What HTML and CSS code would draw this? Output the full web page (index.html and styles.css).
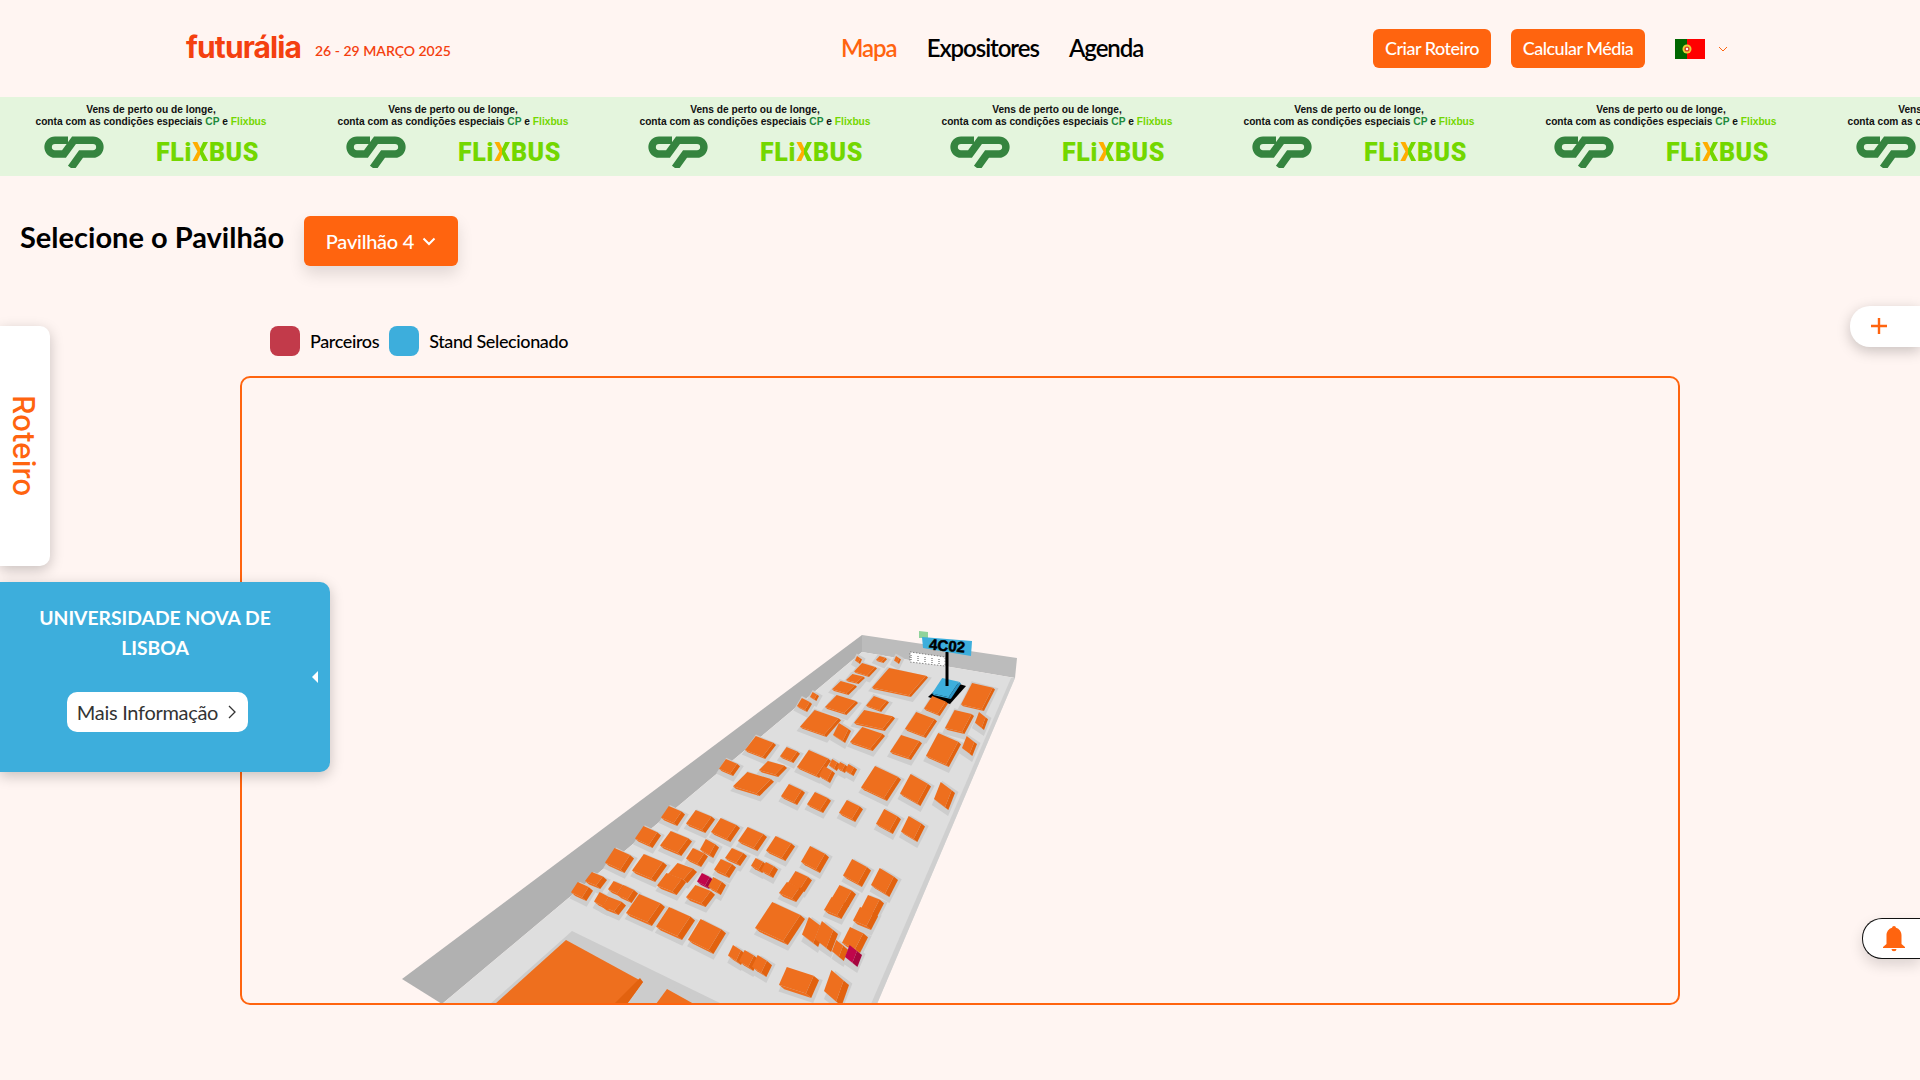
FILE: index.html
```html
<!DOCTYPE html>
<html lang="pt">
<head>
  <meta charset="UTF-8">
  <meta name="viewport" content="width=device-width, initial-scale=1.0">
  <title>Futurália - Mapa</title>
  <link rel="stylesheet" href="styles.css">
</head>
<body>
  <header class="topbar">
    <a class="logo">futurália</a>
    <span class="event-date">26 - 29 MARÇO 2025</span>
    <nav class="main-nav">
      <a class="nav-link active">Mapa</a>
      <a class="nav-link">Expositores</a>
      <a class="nav-link">Agenda</a>
    </nav>
    <div class="top-actions">
      <a class="top-btn btn-route">Criar Roteiro</a>
      <a class="top-btn btn-grade">Calcular Média</a>
      <div class="lang-select">
        <svg class="flag" viewBox="0 0 30 20">
          <rect width="30" height="20" fill="#ff0000"/>
          <rect width="12" height="20" fill="#006600"/>
          <circle cx="12" cy="10" r="4.5" fill="#e8d23a"/>
          <circle cx="12" cy="10" r="2.6" fill="#d8402a"/>
          <circle cx="12" cy="10" r="1.2" fill="#ffffff"/>
        </svg>
        <svg class="lang-arrow" viewBox="0 0 10 6"><path d="M1 1l4 4 4-4"/></svg>
      </div>
    </div>
  </header>

  <div class="promo-strip" id="promoStrip">
    <div class="promo-tile">
      <p class="promo-text">Vens de perto ou de longe,<br>conta com as condições especiais <b class="txt-cp">CP</b> e <b class="txt-flix">Flixbus</b></p>
      <div class="promo-logos">
        <svg class="cp-logo" viewBox="0 0 60 32"><use href="#cpShape"/></svg>
        <span class="flix-logo">FL<span class="flix-i">i</span><span class="flix-x">X</span>BUS</span>
      </div>
    </div>
    <div class="promo-tile">
      <p class="promo-text">Vens de perto ou de longe,<br>conta com as condições especiais <b class="txt-cp">CP</b> e <b class="txt-flix">Flixbus</b></p>
      <div class="promo-logos">
        <svg class="cp-logo" viewBox="0 0 60 32"><use href="#cpShape"/></svg>
        <span class="flix-logo">FL<span class="flix-i">i</span><span class="flix-x">X</span>BUS</span>
      </div>
    </div>
    <div class="promo-tile">
      <p class="promo-text">Vens de perto ou de longe,<br>conta com as condições especiais <b class="txt-cp">CP</b> e <b class="txt-flix">Flixbus</b></p>
      <div class="promo-logos">
        <svg class="cp-logo" viewBox="0 0 60 32"><use href="#cpShape"/></svg>
        <span class="flix-logo">FL<span class="flix-i">i</span><span class="flix-x">X</span>BUS</span>
      </div>
    </div>
    <div class="promo-tile">
      <p class="promo-text">Vens de perto ou de longe,<br>conta com as condições especiais <b class="txt-cp">CP</b> e <b class="txt-flix">Flixbus</b></p>
      <div class="promo-logos">
        <svg class="cp-logo" viewBox="0 0 60 32"><use href="#cpShape"/></svg>
        <span class="flix-logo">FL<span class="flix-i">i</span><span class="flix-x">X</span>BUS</span>
      </div>
    </div>
    <div class="promo-tile">
      <p class="promo-text">Vens de perto ou de longe,<br>conta com as condições especiais <b class="txt-cp">CP</b> e <b class="txt-flix">Flixbus</b></p>
      <div class="promo-logos">
        <svg class="cp-logo" viewBox="0 0 60 32"><use href="#cpShape"/></svg>
        <span class="flix-logo">FL<span class="flix-i">i</span><span class="flix-x">X</span>BUS</span>
      </div>
    </div>
    <div class="promo-tile">
      <p class="promo-text">Vens de perto ou de longe,<br>conta com as condições especiais <b class="txt-cp">CP</b> e <b class="txt-flix">Flixbus</b></p>
      <div class="promo-logos">
        <svg class="cp-logo" viewBox="0 0 60 32"><use href="#cpShape"/></svg>
        <span class="flix-logo">FL<span class="flix-i">i</span><span class="flix-x">X</span>BUS</span>
      </div>
    </div>
    <div class="promo-tile">
      <p class="promo-text">Vens de perto ou de longe,<br>conta com as condições especiais <b class="txt-cp">CP</b> e <b class="txt-flix">Flixbus</b></p>
      <div class="promo-logos">
        <svg class="cp-logo" viewBox="0 0 60 32"><use href="#cpShape"/></svg>
        <span class="flix-logo">FL<span class="flix-i">i</span><span class="flix-x">X</span>BUS</span>
      </div>
    </div>
  </div>

  <svg class="svg-defs" width="0" height="0">
    <defs>
      <g id="cpShape" fill="none" stroke="#35843f" stroke-width="7.5">
        <path d="M24 4.2H11A6.9 6.9 0 0 0 11 18H20L30 4.2H49A6.9 6.9 0 0 1 49 18H37L27 32"/>
      </g>
    </defs>
  </svg>

  <main class="map-page">
    <div class="pavilion-row">
      <h1 class="pavilion-title">Selecione o Pavilhão</h1>
      <button class="pavilion-btn">Pavilhão 4
        <svg class="pavilion-arrow" viewBox="0 0 14 9"><path d="M1.5 1.5L7 7l5.5-5.5"/></svg>
      </button>
    </div>

    <div class="legend">
      <span class="legend-box box-partner"></span>
      <span class="legend-label">Parceiros</span>
      <span class="legend-box box-selected"></span>
      <span class="legend-label">Stand Selecionado</span>
    </div>

    <div class="map-frame">
      <svg class="hall" id="hall" viewBox="242 378 1436 625">
        <polygon class="wall-left" points="862,635 402,979 442,1004 862,652"/>
        <polygon class="wall-back" points="862,635 1017,658 1015,678 862,652"/>
        <polygon class="floor" points="862,652 1015,678 877,1004 442,1004"/>
        <polygon class="floor-edge" points="1015,678 1011,678 871,1004 877,1004"/>
        <polygon class="pad" points="572,931 722,1004 490,1004"/>
        <polygon class="pad" points="655,1004 667,985 720,1004"/>
        <g id="stands"></g>
        <polygon class="big-top" points="566,940 643,982 627,1004 495,1004"/>
        <polygon class="big-side" points="640,978 643,982 627,1004 614,1004"/>
        <polygon class="big-top" points="667,989 694,1004 656,1004"/>

        <polygon class="flag-back" points="919,631 928,632 928,638 919,638"/>
        <polygon class="seats" points="910,652 945,657 945,666 910,662"/>
        <path class="seat-marks" d="M911 655v5M918 656v5M925 657v5M932 658v5M939 659v5"/>
        <polygon class="pole" points="945.5,652 948.5,652 948.5,686 945.5,686"/>
        <polygon class="flag-sign" points="922,637 972,641 971,656 923,648"/>
        <text class="flag-text" x="947" y="651" transform="rotate(5 947 647)">4C02</text>
      </svg>
    </div>
  </main>

  <aside class="route-tab"><span class="route-label">Roteiro</span></aside>

  <aside class="stand-card">
    <h2 class="stand-name">UNIVERSIDADE NOVA DE LISBOA</h2>
    <a class="stand-more">Mais Informação
      <svg class="more-arrow" viewBox="0 0 8 14"><path d="M1 1l6 6-6 6"/></svg>
    </a>
    <span class="stand-toggle"></span>
  </aside>

  <a class="zoom-tab">
    <svg class="zoom-plus" viewBox="0 0 18 18"><path d="M9 1v16M1 9h16"/></svg>
  </a>

  <a class="bell-tab">
    <svg class="bell-icon" viewBox="0 0 24 26"><path d="M12 0.5a2 2 0 0 0-2 1.8C6.6 3.3 4.5 6.3 4.5 10v8.5L1 21.5v1h22v-1l-3.5-3v-8.5c0-3.7-2.1-6.7-5.5-7.7a2 2 0 0 0-2-1.8zM9.5 23.5a2.5 2.2 0 0 0 5 0z"/></svg>
  </a>

  <script src="map.js"></script>
</body>
</html>
```

FILE: styles.css
```css
* {
  margin: 0;
  padding: 0;
  box-sizing: border-box;
}

body {
  font-family: 'Lato', 'Open Sans', sans-serif;
  background-color: #fff5f2;
  color: #000;
  width: 1920px;
  height: 1080px;
  overflow: hidden;
  position: relative;
}

.topbar {
  display: flex;
  align-items: center;
  height: 97px;
  padding: 0 192px 0 186px;
}
.logo {
  font-family: 'Inter', sans-serif;
  font-size: 30px;
  font-weight: 700;
  letter-spacing: -0.9px;
  margin-top: -3px;
  color: #f4400f;
  width: 115px;
}
.event-date {
  margin-left: 14px;
  margin-top: 3px;
  font-size: 14px;
  font-weight: 600;
  color: #f4400f;
  width: 137px;
  white-space: nowrap;
}
.main-nav {
  display: flex;
  gap: 30px;
  margin-left: 389px;
  margin-top: -3px;
}
.nav-link {
  font-size: 24px;
  font-weight: 600;
  letter-spacing: -1.05px;
}
.nav-link.active {
  color: #ff640f;
}
.top-actions {
  display: flex;
  align-items: center;
  margin-left: auto;
}
.top-btn {
  display: flex;
  align-items: center;
  justify-content: center;
  height: 39px;
  padding-bottom: 1px;
  background-color: #ff640f;
  color: #fff;
  border-radius: 6px;
  font-size: 18px;
  font-weight: 500;
  letter-spacing: -0.5px;
}
.btn-route {
  width: 118px;
}
.btn-grade {
  width: 134px;
  margin-left: 20px;
}
.lang-select {
  display: flex;
  align-items: center;
  margin-left: 30px;
}
.flag {
  width: 30px;
  height: 20px;
  display: block;
}
.lang-arrow {
  width: 10px;
  height: 6px;
  margin-left: 13px;
  fill: none;
  stroke: #ff640f;
  stroke-width: 1;
}

.promo-strip {
  display: flex;
  height: 79px;
  background-color: #e4f5dd;
  overflow: hidden;
}
.promo-tile {
  flex: none;
  width: 302px;
  padding-top: 7px;
}
.promo-text {
  font-family: 'Liberation Sans', Arial, sans-serif;
  font-size: 10.2px;
  font-weight: 700;
  line-height: 12px;
  text-align: center;
  color: #111;
}
.txt-cp {
  color: #1d8a3c;
}
.txt-flix {
  color: #73d700;
}
.promo-logos {
  display: flex;
  align-items: center;
  height: 33px;
  margin-top: 7px;
  padding-left: 44px;
}
.cp-logo {
  width: 60px;
  height: 32px;
  display: block;
}
.flix-logo {
  margin-left: 52px;
  font-family: 'Roboto', sans-serif;
  font-size: 25px;
  font-weight: 900;
  letter-spacing: 0.6px;
  line-height: 33px;
  padding-top: 2px;
  color: #73d700;
}
.flix-i {
  letter-spacing: 1px;
}
.flix-x {
  background: linear-gradient(90deg, #ffad00 50%, #73d700 50%);
  -webkit-background-clip: text;
  background-clip: text;
  -webkit-text-fill-color: transparent;
}
.svg-defs {
  position: absolute;
}

.pavilion-row {
  display: flex;
  align-items: center;
  gap: 20px;
  padding: 40px 0 0 20px;
}
.pavilion-title {
  font-size: 29px;
  font-weight: 700;
  margin-top: -9px;
  width: 264px;
  white-space: nowrap;
}
.pavilion-btn {
  display: flex;
  align-items: center;
  justify-content: center;
  gap: 8px;
  width: 154px;
  height: 50px;
  border: none;
  border-radius: 6px;
  background-color: #ff640f;
  color: #fff;
  font-family: inherit;
  font-size: 20px;
  font-weight: 500;
  letter-spacing: -0.25px;
  box-shadow: 0 8px 16px rgba(0, 0, 0, 0.12);
}
.pavilion-arrow {
  width: 14px;
  height: 9px;
  fill: none;
  stroke: #fff;
  stroke-width: 2;
}

.legend {
  display: flex;
  align-items: center;
  gap: 10px;
  margin: 60px 0 20px 270px;
}
.legend-box {
  width: 30px;
  height: 30px;
  border-radius: 8px;
}
.box-partner {
  background-color: #c23a4a;
}
.box-selected {
  background-color: #3daedc;
}
.legend-label {
  font-size: 18px;
  font-weight: 500;
  letter-spacing: -0.38px;
}

.map-frame {
  width: 1440px;
  height: 629px;
  margin-left: 240px;
  border: 2px solid #ff640f;
  border-radius: 10px;
  overflow: hidden;
}
.hall {
  display: block;
  width: 1436px;
  height: 625px;
}
.wall-left {
  fill: #b1b1b1;
}
.wall-back {
  fill: #bcbcbc;
}
.floor {
  fill: #dedede;
}
.floor-edge {
  fill: #cfcfcf;
}
.pad {
  fill: #cccccc;
}
.big-top {
  fill: #ee6f1e;
}
.big-side {
  fill: #e2620f;
}
.flag-back {
  fill: #8fd39b;
}
.seats {
  fill: #fff;
  stroke: #444;
  stroke-width: 0.6;
  stroke-dasharray: 1.5 1.5;
}
.seat-marks {
  fill: none;
  stroke: #555;
  stroke-width: 1;
  stroke-dasharray: 1 1;
}
.pole {
  fill: #000;
}
.flag-sign {
  fill: #3daedc;
}
.flag-text {
  font-family: 'Liberation Sans', sans-serif;
  font-size: 15px;
  font-weight: 700;
  text-anchor: middle;
  fill: #000;
  stroke: #000;
  stroke-width: 0.5;
}

.route-tab {
  position: absolute;
  left: 0;
  top: 326px;
  width: 50px;
  height: 240px;
  background-color: #fff;
  border-radius: 0 10px 10px 0;
  box-shadow: 0 4px 14px rgba(0, 0, 0, 0.22);
  padding-top: 69px;
}
.route-label {
  display: block;
  writing-mode: vertical-rl;
  margin-left: 6px;
  font-family: 'Inter', sans-serif;
  font-size: 30px;
  font-weight: 500;
  line-height: 36px;
  color: #ff640f;
}

.stand-card {
  position: absolute;
  left: 0;
  top: 582px;
  width: 330px;
  height: 190px;
  background-color: #3daedc;
  border-radius: 0 10px 10px 0;
  box-shadow: 0 4px 14px rgba(0, 0, 0, 0.22);
  padding-top: 21px;
  color: #fff;
}
.stand-name {
  width: 250px;
  margin-left: 30px;
  font-size: 19.3px;
  font-weight: 700;
  line-height: 30px;
  text-align: center;
}
.stand-more {
  display: flex;
  align-items: center;
  justify-content: center;
  gap: 10px;
  width: 181px;
  height: 40px;
  margin: 29px 0 0 67px;
  padding-right: 2px;
  background-color: #fff;
  border-radius: 10px;
  color: #333;
  font-size: 20px;
  font-weight: 400;
  letter-spacing: -0.3px;
}
.more-arrow {
  width: 8px;
  height: 14px;
  fill: none;
  stroke: #333;
  stroke-width: 1.3;
}
.stand-toggle {
  position: absolute;
  left: 312px;
  top: 89px;
  border-top: 6px solid transparent;
  border-bottom: 6px solid transparent;
  border-right: 6px solid #fff;
}

.zoom-tab {
  position: absolute;
  right: 0;
  top: 306px;
  width: 70px;
  height: 41px;
  background-color: #fff;
  border-radius: 20px 0 0 20px;
  box-shadow: 0 4px 14px rgba(0, 0, 0, 0.22);
  padding: 11px 0 0 20px;
}
.zoom-plus {
  display: block;
  width: 18px;
  height: 18px;
  fill: none;
  stroke: #ff640f;
  stroke-width: 2.4;
}

.bell-tab {
  position: absolute;
  right: 0;
  top: 918px;
  width: 58px;
  height: 41px;
  background-color: #fff;
  border: 1.5px solid #111;
  border-right: none;
  border-radius: 20px 0 0 20px;
  box-shadow: 0 6px 14px rgba(0, 0, 0, 0.14);
  padding: 6px 0 0 19px;
}
.bell-icon {
  display: block;
  width: 24px;
  height: 27px;
  fill: #ff640f;
}
```

FILE: map.js
```js
// stands are given by the box they fill on screen: x0, y0, x1, y1
const stands = [
  [855,656,862,664], [876,656,887,663], [894,656,901,664], [854,663,877,677],
  [846,674,865,684], [872,668,928,697], [832,681,857,695], [825,695,858,715],
  [797,698,812,712], [810,692,819,701], [866,696,889,712], [800,710,841,737],
  [833,723,851,743], [854,710,895,731], [850,727,885,751], [924,696,948,716],
  [961,683,995,711], [905,712,937,738], [945,710,974,734], [975,712,988,730],
  [890,735,922,760], [926,733,961,767], [962,736,977,756], [780,747,800,763],
  [797,750,831,778], [819,766,835,783], [829,759,840,771], [837,762,848,773],
  [845,764,857,776], [861,766,901,801], [900,774,931,806], [934,782,955,810],
  [745,736,776,759], [719,759,740,776], [759,761,787,777], [733,772,774,796],
  [781,784,805,805], [807,792,831,813], [839,800,863,822], [876,809,901,834],
  [901,816,925,842], [661,806,685,826], [686,810,715,833], [711,818,740,842],
  [738,827,767,851], [766,836,795,861], [801,846,829,873], [635,826,661,848],
  [660,831,692,856], [700,839,719,858], [686,848,708,867], [725,848,747,866],
  [714,859,736,878], [751,858,767,873], [761,862,778,878], [605,848,634,873],
  [632,854,667,882], [585,872,607,889], [571,882,593,901], [668,863,697,883],
  [657,873,686,895], [708,877,726,895], [686,885,715,907], [788,871,812,892],
  [779,882,804,902], [843,859,871,887], [871,868,898,897], [832,885,856,907],
  [824,897,849,919], [861,895,884,917], [853,907,878,930], [755,902,805,945],
  [802,917,825,947], [815,921,838,952], [842,927,868,953], [832,940,848,961],
  [608,881,627,897], [617,885,638,903], [594,892,613,910], [602,897,626,915],
  [626,894,665,926], [656,907,695,940], [688,919,726,954], [728,945,746,965],
  [739,950,759,971], [752,955,772,977], [779,967,819,998], [824,970,849,1006]
];
const partners = [[697,873,714,889], [845,945,862,967]];
const selected = [932,678,961,699];

// the two vanishing points of the floor grid
const vpU = [-380, 410];
const vpV = [1102, 451];

function clamp(val, min, max) {
  return Math.min(max, Math.max(min, val));
}

function addPoly(parent, points, fill) {
  const poly = document.createElementNS('http://www.w3.org/2000/svg', 'polygon');
  poly.setAttribute('points', points.map(p => p.map(n => +n.toFixed(1)).join(',')).join(' '));
  poly.setAttribute('fill', fill);
  parent.appendChild(poly);
}

// top face of a stand: a parallelogram that touches all four sides of its box,
// returned as top, right, bottom, left corner
function shapeOf(b) {
  // the base of a stand sits down and to the right of its top
  const ex = 1.5 + (b[3] - 650) * 0.011;
  const ey = ex * 0.85;
  const w = b[2] - b[0] - ex;
  const tall = b[3] - b[1] - ey;
  const x1 = b[0] + w;
  const y1 = b[1] + tall;
  const cx = b[0] + w / 2;
  const cy = b[1] + tall / 2;
  const slopeU = (cy - vpU[1]) / (cx - vpU[0]);
  const slopeV = (cy - vpV[1]) / (vpV[0] - cx);
  const across = (tall - slopeU * w) / (slopeV - slopeU);
  const d = clamp(across, 0.2 * w, 0.38 * w);
  const q = clamp(1 - slopeV * d / tall, 0.18, 0.33);
  const top = [
    [b[0] + d, b[1]],
    [x1, b[1] + q * tall],
    [x1 - d, y1],
    [b[0], y1 - q * tall]
  ];
  return { top, cx, cy, ex, ey };
}

function drawPad(group, b) {
  const s = shapeOf(b);
  const pad = s.top.map(p => {
    const len = Math.hypot(p[0] - s.cx, p[1] - s.cy);
    return [
      p[0] + (p[0] - s.cx) / len * 5 + s.ex - 1,
      p[1] + (p[1] - s.cy) / len * 5 + s.ey + 1
    ];
  });
  addPoly(group, pad, '#cdcdcd');
}

function drawStand(group, b, topColor, sideColor) {
  const s = shapeOf(b);
  const t = s.top;
  const low = t.map(p => [p[0] + s.ex, p[1] + s.ey]);
  addPoly(group, [t[3], t[2], low[2], low[3]], topColor);
  addPoly(group, [t[1], t[2], low[2], low[1]], sideColor);
  addPoly(group, t, topColor);
}

const group = document.getElementById('stands');
const all = stands.map(b => ({ b, top: '#ee6f1e', side: '#e2620f' }))
  .concat(partners.map(b => ({ b, top: '#c0064b', side: '#a6053f' })));

all.forEach(item => drawPad(group, item.b));
addPoly(group, [[946,680],[966,686],[950,704],[928,697]], '#000000');
all.concat({ b: selected, top: '#3daedc', side: '#2e95c6' })
  .sort((p, q) => p.b[3] - q.b[3])
  .forEach(item => drawStand(group, item.b, item.top, item.side));
```
